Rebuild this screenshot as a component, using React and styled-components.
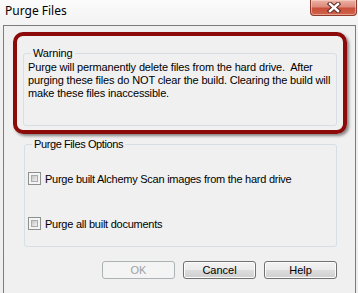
import React from "react";
import styled, { createGlobalStyle } from "styled-components";

const GlobalStyle = createGlobalStyle`
  html, body { margin: 0; padding: 0; }
  body { background: #f0f0f0; }
  * { box-sizing: border-box; }
`;

const Window = styled.div`
  width: 358px;
  height: 293px;
  display: flex;
  flex-direction: column;
  background: linear-gradient(#fbfbfb, #f1f1f1 30px, #efefef);
  overflow: hidden;
  font-family: "Liberation Sans", Arial, sans-serif;
  font-size: 11px;
  color: #000;
`;

const TitleBar = styled.div`
  height: 25px;
  flex: none;
  display: flex;
  justify-content: space-between;
  align-items: flex-start;
  padding-left: 5px;
`;

const Title = styled.div`
  font-family: "Noto Sans", "Open Sans", sans-serif;
  font-size: 12px;
  line-height: 16px;
  padding-top: 3px;
  color: #000;
`;

const CloseButton = styled.div`
  width: 47px;
  height: 16px;
  margin-right: 1px;
  border: 1px solid #8f3a2c;
  border-top: none;
  border-radius: 0 0 4px 4px;
  background: linear-gradient(#ebb3a6, #dd8b7c 45%, #c9503a 55%, #d0644c);
  box-shadow: inset 0 0 0 1px rgba(255, 220, 210, 0.5);
  display: flex;
  align-items: center;
  justify-content: center;
`;

const Client = styled.div`
  flex: 1;
  margin: 0 2px 0 3px;
  border: 1px solid #7c7c7c;
  border-bottom: none;
  background: #f0f0f0;
  display: flex;
  flex-direction: column;
`;

const Highlight = styled.div`
  margin: 6px 8px 0 9px;
  height: 102px;
  border: 4px solid #8c0a0a;
  border-radius: 10px;
  box-shadow: 2px 2px 3px rgba(0, 0, 0, 0.45);
  padding: 11px 6px 0 6px;
`;

const GroupBox = styled.fieldset`
  margin: ${(p) => p.$margin || "0"};
  padding: ${(p) => p.$padding || "0 3px"};
  border: 1px solid #d5dfe5;
  border-radius: 3px;
  min-width: 0;
  height: ${(p) => p.$height};
`;

const Legend = styled.legend`
  margin-left: 4px;
  padding: 0 2px;
  line-height: 13px;
  font-size: 11px;
  letter-spacing: ${(p) => p.$spacing || "-0.15px"};
`;

const WarningText = styled.div`
  line-height: 13px;
  white-space: pre;
  letter-spacing: -0.15px;
  padding-left: 1px;
`;

const OptionRow = styled.label`
  display: flex;
  align-items: center;
  gap: 4px;
  height: 13px;
  margin-top: ${(p) => p.$top}px;
  white-space: nowrap;
  letter-spacing: -0.25px;
`;

const CheckBox = styled.span`
  width: 13px;
  height: 13px;
  flex: none;
  border: 1px solid #8e8f8f;
  background: #f4f4f4;
  padding: 2px;
  display: flex;
  &::after {
    content: "";
    flex: 1;
    border: 1px solid #a9abac;
    background: linear-gradient(135deg, #c6c6c6, #e4e4e4 70%, #f2f2f2);
  }
`;

const ButtonRow = styled.div`
  display: flex;
  justify-content: flex-end;
  gap: 8px;
  margin: 14px 18px 0 0;
`;

const Button = styled.div`
  width: 73px;
  height: 18px;
  border: 1px solid ${(p) => (p.$disabled ? "#adb2b5" : "#707070")};
  border-radius: 3px;
  background: ${(p) =>
    p.$disabled
      ? "#f4f4f4"
      : "linear-gradient(#f2f2f2, #ebebeb 50%, #dddddd 50%, #cfcfcf)"};
  box-shadow: ${(p) => (p.$disabled ? "none" : "inset 0 0 0 1px #fcfcfc")};
  color: ${(p) => (p.$disabled ? "#a0a0a0" : "#000")};
  display: flex;
  align-items: center;
  justify-content: center;
  line-height: 13px;
`;

const CloseGlyph = () => (
  <svg width="14" height="11" viewBox="0 0 14 11">
    <path d="M3 2 L11 9 M11 2 L3 9" stroke="#5a2a24" strokeWidth="4.4" strokeLinecap="square" />
    <path d="M3 2 L11 9 M11 2 L3 9" stroke="#ffffff" strokeWidth="2.4" strokeLinecap="square" />
  </svg>
);

export default function App() {
  return (
    <>
      <GlobalStyle />
      <Window>
        <TitleBar>
          <Title>Purge Files</Title>
          <CloseButton>
            <CloseGlyph />
          </CloseButton>
        </TitleBar>
        <Client>
          <Highlight>
            <GroupBox $padding="1px 3px 0 3px" $height="79px">
              <Legend>Warning</Legend>
              <WarningText>
                {"Purge will permanently delete files from the hard drive.  After\npurging these files do NOT clear the build. Clearing the build will\nmake these files inaccessible."}
              </WarningText>
            </GroupBox>
          </Highlight>
          <GroupBox $margin="4px 18px 0 20px" $padding="0 3px" $height="109px">
            <Legend $spacing="-0.4px">Purge Files Options</Legend>
            <OptionRow $top={21}>
              <CheckBox />
              <span>Purge built Alchemy Scan images from the hard drive</span>
            </OptionRow>
            <OptionRow $top={32}>
              <CheckBox />
              <span>Purge all built documents</span>
            </OptionRow>
          </GroupBox>
          <ButtonRow>
            <Button $disabled>OK</Button>
            <Button>Cancel</Button>
            <Button>Help</Button>
          </ButtonRow>
        </Client>
      </Window>
    </>
  );
}
